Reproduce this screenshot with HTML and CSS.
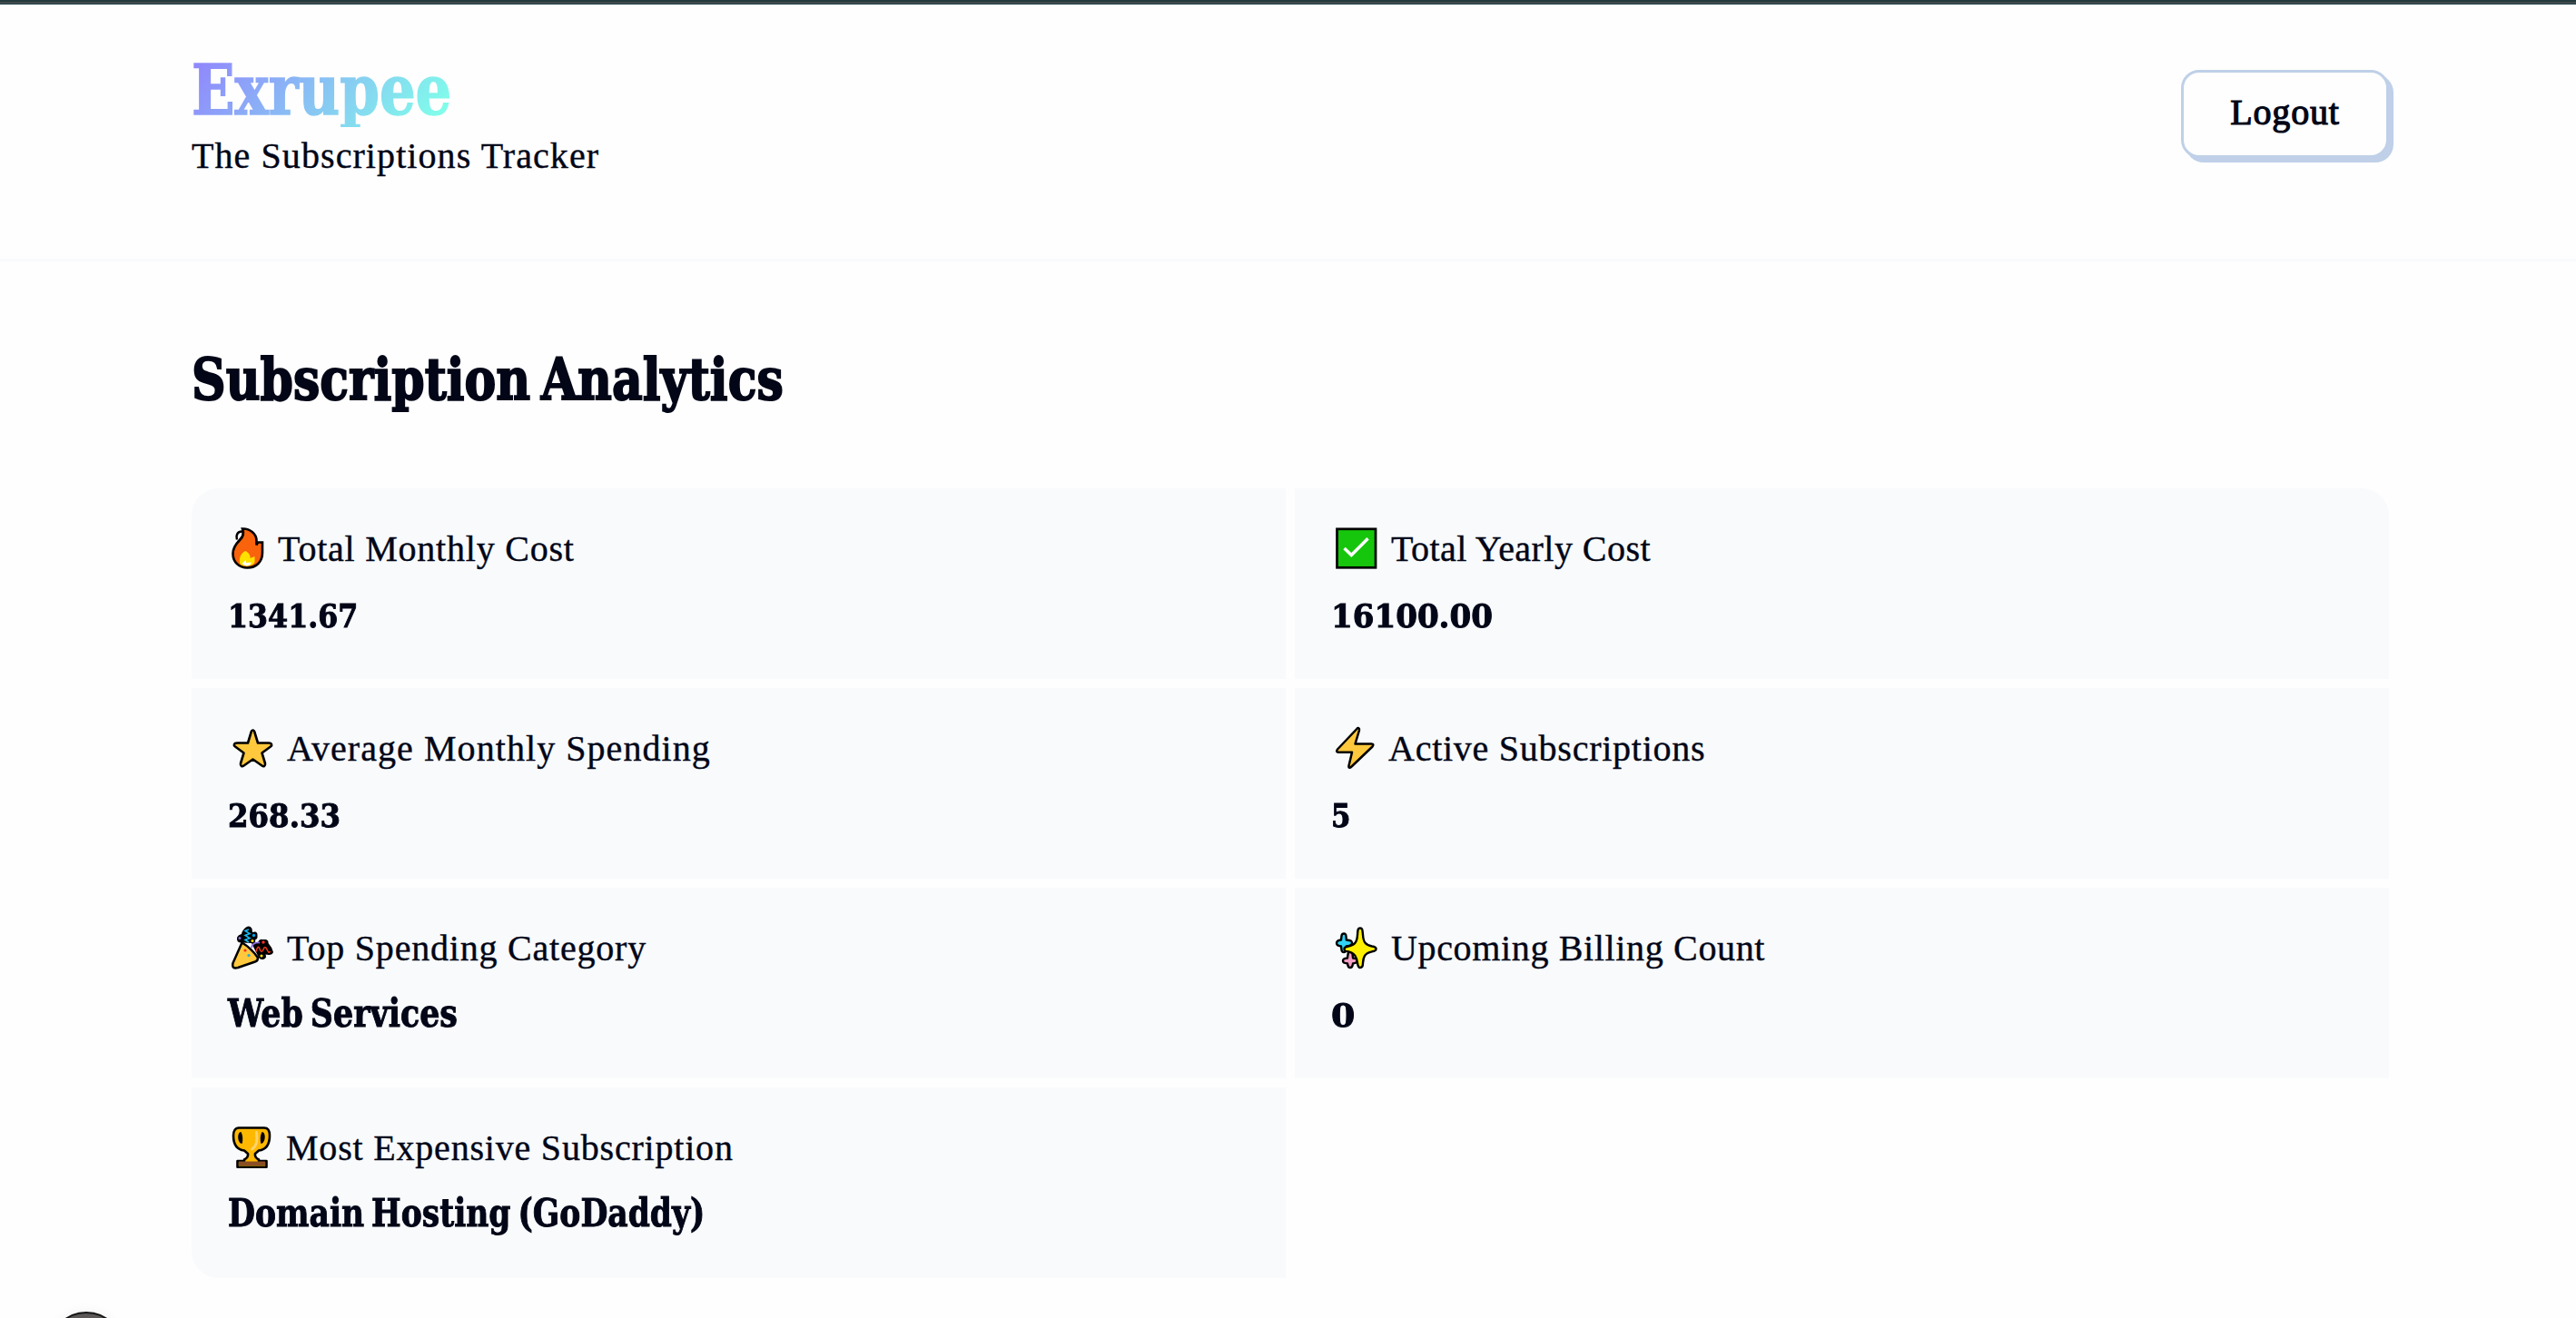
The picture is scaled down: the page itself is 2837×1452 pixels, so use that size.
FILE: index.html
```html
<!DOCTYPE html>
<html lang="en">
<head>
<meta charset="utf-8">
<title>Exrupee</title>
<link rel="stylesheet" href="styles.css">
</head>
<body>
<div class="topbar"></div>
<header class="header">
  <div class="brand">
    <h1 class="brand-name">Exrupee</h1>
    <p class="tagline">The Subscriptions Tracker</p>
  </div>
  <button class="logout" type="button">Logout</button>
</header>
<main class="main">
  <h2 class="title">Subscription Analytics</h2>
  <section class="grid">
    <article class="card card-first">
      <div class="label">
        <svg class="icon icon-fire" viewBox="0 0 36 46" width="36" height="46">
          <path d="M12 1.5C20 1 27.500 7 27.500 14.500V19.500L29 16.500H34V28C34 38 27 44.500 17.500 44.500S1.500 38 1.500 29C1.500 22 5 18 9 14C13.500 9.500 13.500 5 12 1.500Z" fill="#f8630c" stroke="#000" stroke-width="2.600"/>
          <path d="M12 4.500C7 4 4.500 8 6 13.500M12.500 4C14 9 11 12 7 16" fill="none" stroke="#000" stroke-width="2.400"/>
          <path d="M9 39C8 32 12 27 15.500 26C19 28 21 31 20.500 34L25.500 32V38C24 44 10 44 9 39Z" fill="#ffe100"/>
          <path d="M12 39.500 16 36V39L21.500 38.500C22 43 13 43.500 12 39.500Z" fill="#fff"/>
        </svg>
        <span class="text-monthly">Total Monthly Cost</span>
      </div>
      <p class="value"><span class="value-monthly number">1341.67</span></p>
    </article>
    <article class="card card-second">
      <div class="label">
        <svg class="icon" viewBox="0 0 47 46" width="47" height="46">
          <rect x="2.500" y="1.800" width="42.500" height="42.500" fill="#16c60c" stroke="#000" stroke-width="2.700"/>
          <path d="M10.500 23 18.300 30.500 36.500 12.200" fill="none" stroke="#fff" stroke-width="3.400"/>
        </svg>
        <span class="text-yearly">Total Yearly Cost</span>
      </div>
      <p class="value"><span class="value-yearly number">16100.00</span></p>
    </article>
    <article class="card">
      <div class="label">
        <svg class="icon" viewBox="0 0 46 46" width="46" height="46">
          <path d="M23.500 3.500C24.800 3.500 25.200 4.500 25.500 6L29 17.500H41C44.500 17.500 45 20 43 21.500L33.500 28.500 37 40C37.500 43 35.500 44 33.500 42.500L23.500 35.500 13.500 42.500C11.500 44 9.500 43 10 40L13.500 28.500 4 21.500C2 20 2.500 17.500 6 17.500H18L21.500 6C21.800 4.500 22.200 3.500 23.500 3.500Z" fill="#ffc83d" stroke="#000" stroke-width="2.600" stroke-linejoin="round"/>
        </svg>
        <span class="text-average">Average Monthly Spending</span>
      </div>
      <p class="value"><span class="value-average number">268.33</span></p>
    </article>
    <article class="card">
      <div class="label">
        <svg class="icon icon-bolt" viewBox="0 0 44 46" width="44" height="46">
          <path d="M24.300 2 3 24.500C1.500 26.500 2 27.700 4 27.700H19L15.500 42.500C15 45 17 45.500 18.500 43.500L41.500 21.500C43 19.500 42.500 18.500 40.500 18.500H22.500L27 3.500C27.300 1 25.500 .5 24.300 2Z" fill="#ffc83d" stroke="#000" stroke-width="2.500" stroke-linejoin="round"/>
        </svg>
        <span class="text-active">Active Subscriptions</span>
      </div>
      <p class="value"><span class="value-active number">5</span></p>
    </article>
    <article class="card">
      <div class="label">
        <svg class="icon icon-party" viewBox="0 0 47 46" width="47" height="46">
          <path d="M16 0.500Q20-2 22.500 2L23 6Q29 4 28.500 10Q29 13 26 14.500Q27 17 24 19L29 17Q31 13 34 14H38Q41 15 40.500 18Q45 23 46 28Q45 31 41 31L37.500 30.500Q39 34 36 35.500Q32 37 30 34L22 18 12 17.500Q5 18 6 12Q7 9 11 8Q12 3 16 .5Z" fill="#000"/>
          <path d="M11.500 17.500Q21 23 29 34Q29 38 26 38.500L7 45Q0 47 1.500 40Z" fill="#ffc83d" stroke="#000" stroke-width="2.500" stroke-linejoin="round"/>
          <path d="M19 3 15 4.500 20 7.500 15 9.500 20 12.500 15 14.500 19 17" fill="none" stroke="#1bb8ee" stroke-width="1.600"/>
          <path d="M22 23Q23 17 31 17.500" fill="none" stroke="#886ce4" stroke-width="1.800"/>
          <path d="M27 27.500Q29 19 31 24.500T35 25T39 25T42.500 27" fill="none" stroke="#f03a17" stroke-width="1.500"/>
          <circle cx="9" cy="12.500" r="1.500" fill="#886ce4"/><circle cx="24.500" cy="9.500" r="1.700" fill="#00a6ed"/>
          <circle cx="23" cy="15.500" r="1.500" fill="#ffe100"/><circle cx="35" cy="17" r="1.700" fill="#f92f20"/><circle cx="33" cy="32" r="1.600" fill="#ffe100"/>
          <circle cx="15" cy="26" r="1.600" fill="#f92f20"/><circle cx="19" cy="31.500" r="1.600" fill="#26a9d6"/>
        </svg>
        <span class="text-top">Top Spending Category</span>
      </div>
      <p class="value"><span class="value-top">Web Services</span></p>
    </article>
    <article class="card">
      <div class="label">
        <svg class="icon" viewBox="0 0 47 46" width="47" height="46">
          <g stroke="#000" stroke-width="2.400" stroke-linejoin="round">
            <path d="M10 7.500C12.500 7.500 12.500 9 12.800 14.500C18 15 19 15.500 19 18S17 21 12.800 21.500C12.500 26 12.500 28 10 28S7.500 26 7 21.500C3 21 2 20 2 18S3 15 7 14.500C7.500 9 7.500 7.500 10 7.500Z" fill="#31d2f7"/>
            <path d="M17 27C19.500 27 19.500 29 20 34.500C24 35 25 35.500 25 37.500S23.500 40 20 40.500C19.500 43 19.500 45 17 45S14.500 43 14 40.500C10 40 9 39.500 9 37.500S10 35 14 34.500C14.500 29 15 27 17 27Z" fill="#f59fc6"/>
            <path d="M28 1.500C30.500 1.500 30.500 3 31 9C31.500 17 34 20 41 21.500C44.500 22 45.500 22.500 45.500 24.300S44 27 41 27.300C33 29 31.500 33 31 40C31 43.500 30 45 28 45S25.500 43.500 25 40C24 33 22 29 15 27.300C11 27 10.500 26 10.500 24.300S12 22 15 21.500C22 20 24.500 17 25 9C25.300 3 25.500 1.500 28 1.500Z" fill="#fff000"/>
          </g>
        </svg>
        <span class="text-upcoming">Upcoming Billing Count</span>
      </div>
      <p class="value"><span class="value-upcoming number">0</span></p>
    </article>
    <article class="card card-last">
      <div class="label">
        <svg class="icon icon-cup" viewBox="0 0 45 46" width="45" height="46">
          <path d="M8 1.500H36C40 1.500 42 5 42 10C42 20 38 25.500 30 26.500L26 30C25.500 33 27 35 30 36.500V38H38.500V44.800H6.500V38H14V36.500C17 35 18.500 33 18 30L14 26.500C6 25.500 2 20 2 10C2 5 4 1.500 8 1.500Z" fill="#ffb800" stroke="#000" stroke-width="2.600" stroke-linejoin="round"/>
          <path d="M8 38.500H37V43H8Z" fill="#8b4f24"/>
          <path d="M10.500 6C6 6 6 18 11.500 19Q13.500 12 10.500 6ZM33.500 6C38 6 38 18 32.500 19Q30.500 12 33.500 6Z" fill="#000"/>
          <path d="M27.500 6.500Q29.500 21 22.500 25" fill="none" stroke="#ffd36b" stroke-width="3" stroke-linecap="round"/>
        </svg>
        <span class="text-most">Most Expensive Subscription</span>
      </div>
      <p class="value"><span class="value-most">Domain Hosting (GoDaddy)</span></p>
    </article>
  </section>
</main>
<div class="floating-badge"></div>
</body>
</html>
```

FILE: styles.css
```css
* { box-sizing: border-box; margin: 0; padding: 0; }

html, body { height: 100%; overflow: hidden; }

body {
  background: #fefefe;
  color: #020617;
  font-family: "Liberation Serif", serif;
  font-size: 40px;
}

.topbar {
  height: 5px;
  background: linear-gradient(#24393d 0 2px, #414b4c 2px 4px, #24454c 4px);
}

.header {
  display: flex;
  justify-content: space-between;
  align-items: flex-start;
  height: 283px;
  padding: 55px 206px 0 211px;
  border-bottom: 3px solid #f8fafc;
}

.brand-name {
  width: fit-content;
  font: bold 76px/80px "DejaVu Serif", serif;
  background: linear-gradient(135deg, #9089fc 5%, #80ffea 95%);
  -webkit-background-clip: text;
  background-clip: text;
  color: transparent;
  -webkit-text-stroke: 1.5px transparent;
  transform: scaleX(.822);
  transform-origin: left;
}

.tagline {
  margin-top: 9px;
  line-height: 46px;
  letter-spacing: 1.08px;
  -webkit-text-stroke: .4px #020617;
}

.logout {
  width: 229px;
  height: 97px;
  margin-top: 17px;
  padding-bottom: 4px;
  border: 3px solid #bfd0e8;
  border-radius: 20px;
  box-shadow: 5px 5px 0 #bfd0e8;
  background: #fefefe;
  color: inherit;
  font: 40px/46px "Liberation Serif", serif;
  letter-spacing: .8px;
  -webkit-text-stroke: 1.2px #020617;
}

.main { padding: 90px 206px 0 211px; }

.title {
  width: fit-content;
  font: bold 63px/80px "DejaVu Serif", serif;
  word-spacing: -8px;
  -webkit-text-stroke: 2px #020617;
  transform: scaleX(.827);
  transform-origin: left;
}

.grid {
  display: grid;
  grid-template-columns: 1fr 1fr;
  grid-auto-rows: 210px;
  gap: 10px;
  margin-top: 80px;
}

.card { padding: 43px 40px 0; background: #f8fafc; }
.card-first { border-top-left-radius: 30px; }
.card-second { border-top-right-radius: 30px; }
.card-last { border-bottom-left-radius: 30px; }

.label {
  display: flex;
  height: 46px;
  line-height: 48px;
  white-space: nowrap;
  -webkit-text-stroke: .4px #020617;
}

.icon { display: block; overflow: visible; margin: 0 15px 0 4px; }
.icon-fire { margin-right: 15px; }
.icon-party { margin-right: 14px; }
.icon-cup { margin-right: 15px; }

.text-monthly { letter-spacing: .77px; }
.text-yearly { letter-spacing: .45px; }
.text-average { letter-spacing: 1.06px; }
.text-active { letter-spacing: .75px; }
.text-top { letter-spacing: .79px; }
.text-upcoming { letter-spacing: .65px; }
.text-most { letter-spacing: .8px; }

.value {
  height: 55px;
  margin-top: 24px;
  font: bold 43px/50px "DejaVu Serif", serif;
  word-spacing: -5px;
  white-space: nowrap;
  -webkit-text-stroke: 1px #020617;
}

.value span { display: block; width: fit-content; transform-origin: left; }
.value .number { font-size: 36px; line-height: 55px; }

.value-monthly { transform: scaleX(.88); }
.value-yearly { transform: scaleX(.947); }
.value-average { transform: scaleX(.9); }
.value-active { transform: scaleX(.857); }
.value-upcoming { transform: scaleX(1.05); }
.value-top { transform: scaleX(.81); }
.value-most { transform: scaleX(.803); }

/* Round badge pinned over the page, running off the bottom edge */
.floating-badge {
  position: fixed;
  left: 54px;
  top: 1445px;
  width: 82px;
  height: 82px;
  border: 2px solid #151515;
  border-radius: 50%;
  background: #5c5858;
  box-shadow: 0 0 14px rgba(0, 0, 0, .05);
}
```
